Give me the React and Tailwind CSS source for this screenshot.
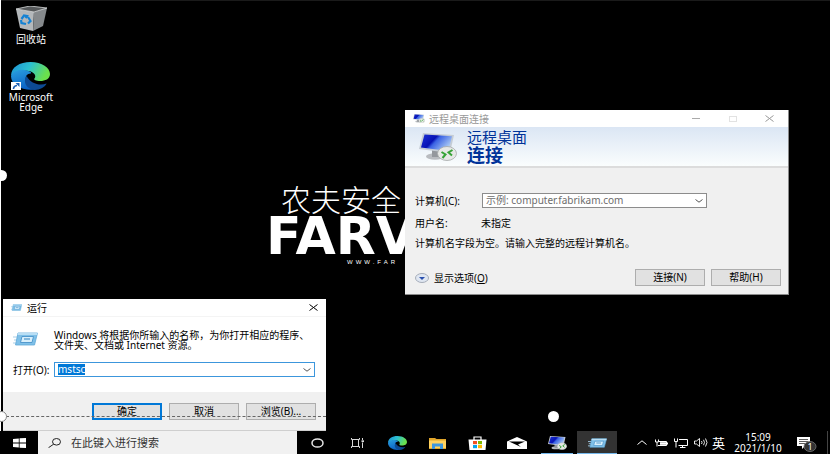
import { useEffect, useRef } from "react";

function EdgeIcon({ className, id }) {
  return (
    <svg viewBox="0 0 40 28" preserveAspectRatio="none" className={className} aria-hidden="true">
      <defs>
        <linearGradient id={id + "a"} x1="0" y1="0" x2="1" y2="0.3">
          <stop offset="0" stopColor="#1c8fd8" />
          <stop offset="0.5" stopColor="#2cc0d0" />
          <stop offset="1" stopColor="#6be04c" />
        </linearGradient>
        <linearGradient id={id + "b"} x1="0" y1="0" x2="0.4" y2="1">
          <stop offset="0" stopColor="#2aa0e0" />
          <stop offset="1" stopColor="#0b62c4" />
        </linearGradient>
      </defs>
      <path d="M0 14C0 5 9 0 20 0C32 0 40 6 40 12C40 17 35 19 30 19C26 19 23 18 24 16.500C26 15 25 10 18 9C9 8 2 11 0 14Z" fill={`url(#${id}a)`} />
      <path d="M0 14C2 9 8 7 14 8C20 9 22 11 20 11.500C15 12 14 16 16 20C18 24 22 27 27 27C14 30 0 24 0 14Z" fill={`url(#${id}b)`} />
      <path d="M16 14C12 19 15 27 24 28C30 28 35 25 36.500 21.500C30 24 20 22 16 14Z" fill="#0d4a93" />
    </svg>
  );
}

function RecycleBinIcon() {
  return (
    <svg viewBox="0 0 31 25" className="h-[25px] w-[31px]" aria-hidden="true">
      <path d="M0 3L14 0L31 2L18 6Z" fill="#55585a" />
      <path d="M0 3L18 6L17 25L4 22Z" fill="#b4b8bb" />
      <path d="M18 6L31 2L27 20L17 25Z" fill="#85898c" />
      <path d="M0 3L14 0L31 2L18 6Z" fill="none" stroke="#d8dadc" strokeWidth="0.800" />
      <path d="M5.500 13L8 9.500L11 10L9.500 12M12 11L14.500 15L12 17.500M10 18L5.500 17L5 14" fill="none" stroke="#1482d4" strokeWidth="2.200" />
    </svg>
  );
}

function RemoteIcon({ className, id }) {
  return (
    <svg viewBox="0 0 38 28" preserveAspectRatio="none" className={className} aria-hidden="true">
      <defs>
        <linearGradient id={id} x1="0" y1="0" x2="1" y2="0.5">
          <stop offset="0" stopColor="#1c32d8" />
          <stop offset="0.450" stopColor="#0712b4" />
          <stop offset="0.550" stopColor="#3a62e4" />
          <stop offset="1" stopColor="#a8c8f4" />
        </linearGradient>
      </defs>
      <ellipse cx="16" cy="23.500" rx="9" ry="3.200" fill="#b9bcc0" />
      <path d="M13 17L21 18L20 24H13Z" fill="#94989d" />
      <path d="M4 0L35 2L31 20L0 16Z" fill="#c5ccd4" />
      <path d="M5.500 1.500L33 3.200L29.500 18L2 14.500Z" fill={`url(#${id})`} />
      <ellipse cx="28" cy="20.500" rx="9.500" ry="7" fill="#e6e8e6" stroke="#a4a8a8" strokeWidth="0.800" />
      <path d="M22.500 19L26.500 21.500L23.500 25M33.500 17L29.500 19.500L33 22.500" fill="none" stroke="#36a336" strokeWidth="2" />
    </svg>
  );
}

function RunIcon({ className }) {
  return (
    <svg viewBox="0 0 25 14" preserveAspectRatio="none" className={className} aria-hidden="true">
      <path d="M0 5H6M1 8H6M0 11H5" stroke="#a9cfe8" strokeWidth="1.200" />
      <path d="M5 1H24.500L21.500 13H2.500Z" fill="#7fc0e8" stroke="#5fa8d8" strokeWidth="0.800" />
      <path d="M5 1H24.500L24 3H4.500Z" fill="#b9def4" />
      <path d="M9 4.500H20.500L19 10.500H7.500Z" fill="#d8effb" stroke="#4a93c9" strokeWidth="0.900" />
      <path d="M11 7H17" stroke="#4a93c9" strokeWidth="1.200" />
    </svg>
  );
}

function Chevron({ className }) {
  return (
    <svg viewBox="0 0 8 4" className={className} fill="none" stroke="currentColor" aria-hidden="true">
      <path d="M0.500 0.500L4 3.200L7.500 0.500" />
    </svg>
  );
}

function CloseIcon() {
  return (
    <svg viewBox="0 0 9 7" className="h-[7px] w-[9px]" fill="none" stroke="currentColor" aria-hidden="true">
      <path d="M0.500 0.500L8.500 6.500M8.500 0.500L0.500 6.500" />
    </svg>
  );
}

function DialogButton({ children, primary }) {
  return (
    <button
      className={
        "h-[17px] w-[70px] bg-[#e1e1e1] text-center leading-[13px] text-black " +
        (primary ? "border-2 border-[#0078d7]" : "border border-[#adadad]")
      }
    >
      {children}
    </button>
  );
}

function RemoteDesktopWindow() {
  return (
    <section className="absolute left-[405px] top-[110px] w-[384px] border-r border-b border-[#8a8a8a] bg-[#f0f0f0] pb-2">
      <header className="flex h-[17px] items-center bg-white pl-2 text-[#999999]">
        <RemoteIcon id="rdTitle" className="h-[9px] w-[12px]" />
        <h1 className="ml-1 flex-1">远程桌面连接</h1>
        <button aria-label="最小化" className="flex w-[37px] justify-center"><span className="h-px w-2 bg-[#aaaaaa]" /></button>
        <button aria-label="最大化" className="flex w-[37px] justify-center"><span className="h-[6px] w-2 border border-[#e2e2e2]" /></button>
        <button aria-label="关闭" className="flex w-[37px] justify-center"><CloseIcon /></button>
      </header>
      <div className="flex h-[41px] items-center border-b-2 border-[#dcdcdc] bg-linear-to-b from-[#dbe6f4] to-[#fafdfd] pl-[14px] text-[#003399]">
        <RemoteIcon id="rdBanner" className="h-[28px] w-[38px]" />
        <div className="ml-[10px]">
          <p className="text-[15px] leading-[17px]">远程桌面</p>
          <p className="text-[18px] leading-[18px] font-bold">连接</p>
        </div>
      </div>
      <form className="px-[10px] pt-[25px]" onSubmit={(e) => e.preventDefault()}>
        <div className="flex items-center">
          <label htmlFor="computer" className="w-[67px]">计算机(C):</label>
          <div className="flex h-[15px] w-[225px] items-center border border-[#8c8c8c] bg-white pr-[3px]">
            <input id="computer" placeholder="示例: computer.fabrikam.com" className="h-[13px] min-w-0 flex-1 pl-[3px] leading-[13px] outline-none placeholder:text-[#6d6d6d]" />
            <button type="button" aria-label="展开"><Chevron className="h-[4px] w-[8px] text-[#555555]" /></button>
          </div>
        </div>
        <div className="mt-[7px] flex leading-[16px]">
          <span className="w-[66px]">用户名:</span>
          <span>未指定</span>
        </div>
        <p className="mt-1 leading-[16px]">计算机名字段为空。请输入完整的远程计算机名。</p>
        <div className="mt-[18px] flex items-center gap-[6px] -mr-[3px]">
          <button type="button" className="flex flex-1 items-center gap-[5px]">
            <svg viewBox="0 0 14 10" className="h-[10px] w-[14px]" aria-hidden="true">
              <ellipse cx="7" cy="5" rx="6.500" ry="4.500" fill="#dfe6f1" stroke="#a5acb8" />
              <path d="M4 4H10L7 7Z" fill="#2a4fae" />
            </svg>
            <span>显示选项(<u>O</u>)</span>
          </button>
          <DialogButton>连接(N)</DialogButton>
          <DialogButton>帮助(H)</DialogButton>
        </div>
      </form>
    </section>
  );
}

function RunWindow() {
  const field = useRef(null);
  useEffect(() => {
    field.current.focus();
    field.current.select();
  }, []);
  return (
    <section className="absolute bottom-[23px] left-[3px] w-[323px] bg-white">
      <header className="flex h-[18px] items-center border-b border-[#f4f4f4] pr-2 pl-2">
        <RunIcon className="h-[7px] w-[11px]" />
        <h1 className="ml-[5px] flex-1">运行</h1>
        <button aria-label="关闭"><CloseIcon /></button>
      </header>
      <form onSubmit={(e) => e.preventDefault()}>
        <div className="flex pt-[13px] pl-[10px]">
          <RunIcon className="mt-[2px] h-[14px] w-[25px]" />
          <p className="ml-4 leading-[10px]">
            Windows 将根据你所输入的名称，为你打开相应的程序、
            <br />
            文件夹、文档或 Internet 资源。
          </p>
        </div>
        <div className="flex items-center pt-[12px] pr-[11px] pb-[15px] pl-[10px]">
          <label htmlFor="open" className="w-[41px]">打开(O):</label>
          <div className="flex h-[15px] flex-1 items-center border border-[#3c96dc] bg-white pr-[3px]">
            <input id="open" ref={field} defaultValue="mstsc" className="h-[11px] min-w-0 flex-1 pl-[3px] leading-[11px] outline-none selection:bg-[#0078d7] selection:text-white" />
            <button type="button" aria-label="展开"><Chevron className="h-[4px] w-[8px] text-[#555555]" /></button>
          </div>
        </div>
        <footer className="flex h-[39px] justify-end gap-[7px] border-b border-[#cfcfcf] bg-[#f0f0f0] pt-[11px] pr-[10px]">
          <DialogButton primary>确定</DialogButton>
          <DialogButton>取消</DialogButton>
          <DialogButton>浏览(B)...</DialogButton>
        </footer>
      </form>
    </section>
  );
}

function TaskButton({ label, children, active, open }) {
  return (
    <button
      aria-label={label}
      className={
        "relative flex w-10 shrink-0 items-center justify-center " + (active ? "bg-[#333333]" : "")
      }
    >
      {children}
      {open && <span className={"absolute bottom-0 h-px bg-[#76b9ed] " + (active ? "inset-x-0" : "inset-x-1")} />}
    </button>
  );
}

function Taskbar() {
  return (
    <nav className="absolute inset-x-0 bottom-0 flex h-[23px] bg-black text-white">
      <button aria-label="开始" className="flex w-[38px] shrink-0 items-center justify-center">
        <svg viewBox="0 0 13 10" className="h-[10px] w-[13px]" fill="white" aria-hidden="true">
          <path d="M0 1L5.800 0.400V4.600H0ZM6.600 0.300L13 0V4.600H6.600ZM0 5.400H5.800V9.600L0 9ZM6.600 5.400H13V10L6.600 9.700Z" />
        </svg>
      </button>
      <div className="flex w-[259px] shrink-0 items-center bg-[#f1f1f1] pl-[10px] text-[#333333]">
        <svg viewBox="0 0 13 10" className="h-[10px] w-[13px]" fill="none" stroke="#222222" aria-hidden="true">
          <ellipse cx="8.500" cy="3.800" rx="4" ry="3.300" />
          <path d="M5.600 6.200L0.500 9.700" />
        </svg>
        <input aria-label="搜索" placeholder="在此键入进行搜索" className="ml-[10px] h-4 min-w-0 flex-1 text-[11px] outline-none placeholder:text-[#333333]" />
      </div>
      <TaskButton label="Cortana">
        <svg viewBox="0 0 13 10" className="h-[10px] w-[13px]" fill="none" stroke="#e6e6e6" strokeWidth="1.500" aria-hidden="true">
          <ellipse cx="6.500" cy="5" rx="5.500" ry="4.100" />
        </svg>
      </TaskButton>
      <TaskButton label="任务视图">
        <svg viewBox="0 0 13 10" className="h-[10px] w-[13px]" fill="none" stroke="#d8d8d8" aria-hidden="true">
          <path d="M0.500 0V1.500H8.500V0M0.500 10V8.500H8.500V10M1.500 1.500V8.500M7.500 1.500V8.500M11.500 0V2M11.500 4.500V10" />
          <path d="M10.500 3.200H13" strokeWidth="1.800" />
        </svg>
      </TaskButton>
      <TaskButton label="Microsoft Edge"><EdgeIcon id="edgeBar" className="h-[14px] w-[19px]" /></TaskButton>
      <TaskButton label="文件资源管理器">
        <svg viewBox="0 0 17 12" className="h-[12px] w-[17px]" aria-hidden="true">
          <path d="M0 1H6L7.500 2H17V12H0Z" fill="#e0a52a" />
          <path d="M0 3.500H17V11H0Z" fill="#ffd25f" />
          <path d="M3 6.500H14V12H11V9.500H6V12H3Z" fill="#3d97de" />
        </svg>
      </TaskButton>
      <TaskButton label="Microsoft Store">
        <svg viewBox="0 0 19 14" className="h-[14px] w-[19px]" aria-hidden="true">
          <path d="M6 4V1H13V4" fill="none" stroke="white" strokeWidth="1.200" />
          <path d="M0.500 3.500H18.500L17.500 14H1.500Z" fill="white" />
          <path d="M5 5H9V8.200H5Z" fill="#f25022" />
          <path d="M10 5H14V8.200H10Z" fill="#7fba00" />
          <path d="M5 9H9V12.200H5Z" fill="#00a4ef" />
          <path d="M10 9H14V12.200H10Z" fill="#ffb900" />
        </svg>
      </TaskButton>
      <TaskButton label="邮件">
        <svg viewBox="0 0 20 12" className="h-[12px] w-[20px]" aria-hidden="true">
          <path d="M0 4.500L10 0L20 4.500V12H0Z" fill="white" />
          <path d="M2 4.500H18L11 7.500L14 10Z" fill="black" />
        </svg>
      </TaskButton>
      <TaskButton label="远程桌面连接" open><RemoteIcon id="rdBar" className="h-[14px] w-[19px]" /></TaskButton>
      <TaskButton label="运行" open active><RunIcon className="h-[10px] w-[19px]" /></TaskButton>
      <div className="ml-auto flex shrink-0 items-center">
        <svg viewBox="0 0 10 5" className="h-[5px] w-[10px]" fill="none" stroke="white" aria-hidden="true">
          <path d="M0.500 4.500L5 0.800L9.500 4.500" />
        </svg>
        <svg viewBox="0 0 13 8" className="ml-2 h-[8px] w-[13px]" fill="none" stroke="white" aria-hidden="true">
          <path d="M4 2.500H11.500V6.500H3" />
          <path d="M5 4.500H11" strokeWidth="2.600" />
          <path d="M12.500 3.500V5.500M0.500 0.500V3H3.500V0.500M2 3V7.500" />
        </svg>
        <svg viewBox="0 0 14 10" className="ml-[6px] h-[10px] w-[14px]" fill="none" stroke="white" aria-hidden="true">
          <path d="M5 1.500H13.500V7.500H4.500M8.500 7.500V9.500M6 9.500H11.500M0.500 0.500V3.500H3.500V0.500M2 3.500V9.500" />
        </svg>
        <svg viewBox="0 0 14 9" className="ml-[6px] h-[9px] w-[14px]" fill="none" stroke="white" strokeWidth="0.900" aria-hidden="true">
          <path d="M0.500 3V6H2.500L5.500 8.500V0.500L2.500 3ZM7.500 3Q8.600 4.500 7.500 6M9.500 1.800Q11.500 4.500 9.500 7.200M11.500 0.500Q14.500 4.500 11.500 8.500" />
        </svg>
        <span className="ml-1 text-[13px] leading-[16px]">英</span>
        <time className="ml-2 w-[50px] pt-px text-center leading-[11px]">15:09<br />2021/1/10</time>
        <svg viewBox="0 0 20 16" className="mt-1 ml-[14px] h-[16px] w-[20px]" role="img" aria-label="通知">
          <path d="M0 0H13V9H8L5 12V9H0Z" fill="white" />
          <path d="M2 2.500H11M2 4.500H11M2 6.500H8" stroke="#333333" strokeWidth="0.800" />
          <ellipse cx="13" cy="9.500" rx="6" ry="5" fill="#333333" stroke="#777777" strokeWidth="0.800" />
          <text x="13" y="13" textAnchor="middle" fontSize="9" fill="white">1</text>
        </svg>
        <span className="ml-[10px] mr-[2px] h-[23px] w-px bg-[#444444]" />
      </div>
    </nav>
  );
}

export default function App() {
  return (
    <main className="relative h-screen overflow-hidden bg-black font-['Noto_Sans','Noto_Sans_CJK_SC',sans-serif] text-[10px] leading-[12px] text-black">
      <div className="absolute inset-x-0 top-0 h-px bg-[#1a1a1a]" />
      <div className="absolute inset-y-0 left-0 w-px bg-white" />
      <div className="flex w-[62px] flex-col items-center gap-[18px] pt-[6px] text-center leading-[10px] text-white">
        <a href="#recycle" className="flex flex-col items-center gap-[3px]">
          <RecycleBinIcon />
          回收站
        </a>
        <a href="#edge" className="flex flex-col items-center gap-[2px]">
          <span className="relative">
            <EdgeIcon id="edgeDesk" className="h-[28px] w-[39px]" />
            <svg viewBox="0 0 10 8" className="absolute bottom-0 left-0 h-[8px] w-[10px]" aria-hidden="true">
              <path d="M0 0H10V8H0Z" fill="white" />
              <path d="M2.500 7Q2.500 4 6 3.500" fill="none" stroke="#1b5fb4" strokeWidth="1.600" />
              <path d="M4.500 1H8.500V5Z" fill="#1b5fb4" />
            </svg>
          </span>
          <span>Microsoft<br />Edge</span>
        </a>
      </div>

      <div className="absolute left-[266px] top-[186px] w-[139px] overflow-hidden text-white">
        <p className="pl-[15px] text-[30px] leading-[28px] font-light">农夫安全</p>
        <p className="font-['DejaVu_Sans',sans-serif] text-[52px] leading-[44px] font-bold">FARV</p>
        <p className="pl-[81px] font-['Liberation_Sans',sans-serif] text-[6px] leading-[8px] tracking-[3px]">WWW.FAR</p>
      </div>

      <RemoteDesktopWindow />
      <RunWindow />
      <Taskbar />

      <div className="absolute bottom-[37px] left-[6px] w-[320px] border-t border-dashed border-[#666666]" />
      <span className="absolute -left-1 top-[170px] size-[11px] rounded-full bg-white" />
      <span className="absolute -left-1 top-[411px] size-[11px] rounded-full border border-[#888888] bg-white" />
      <span className="absolute left-[548px] top-[411px] size-[11px] rounded-full bg-white" />
    </main>
  );
}
